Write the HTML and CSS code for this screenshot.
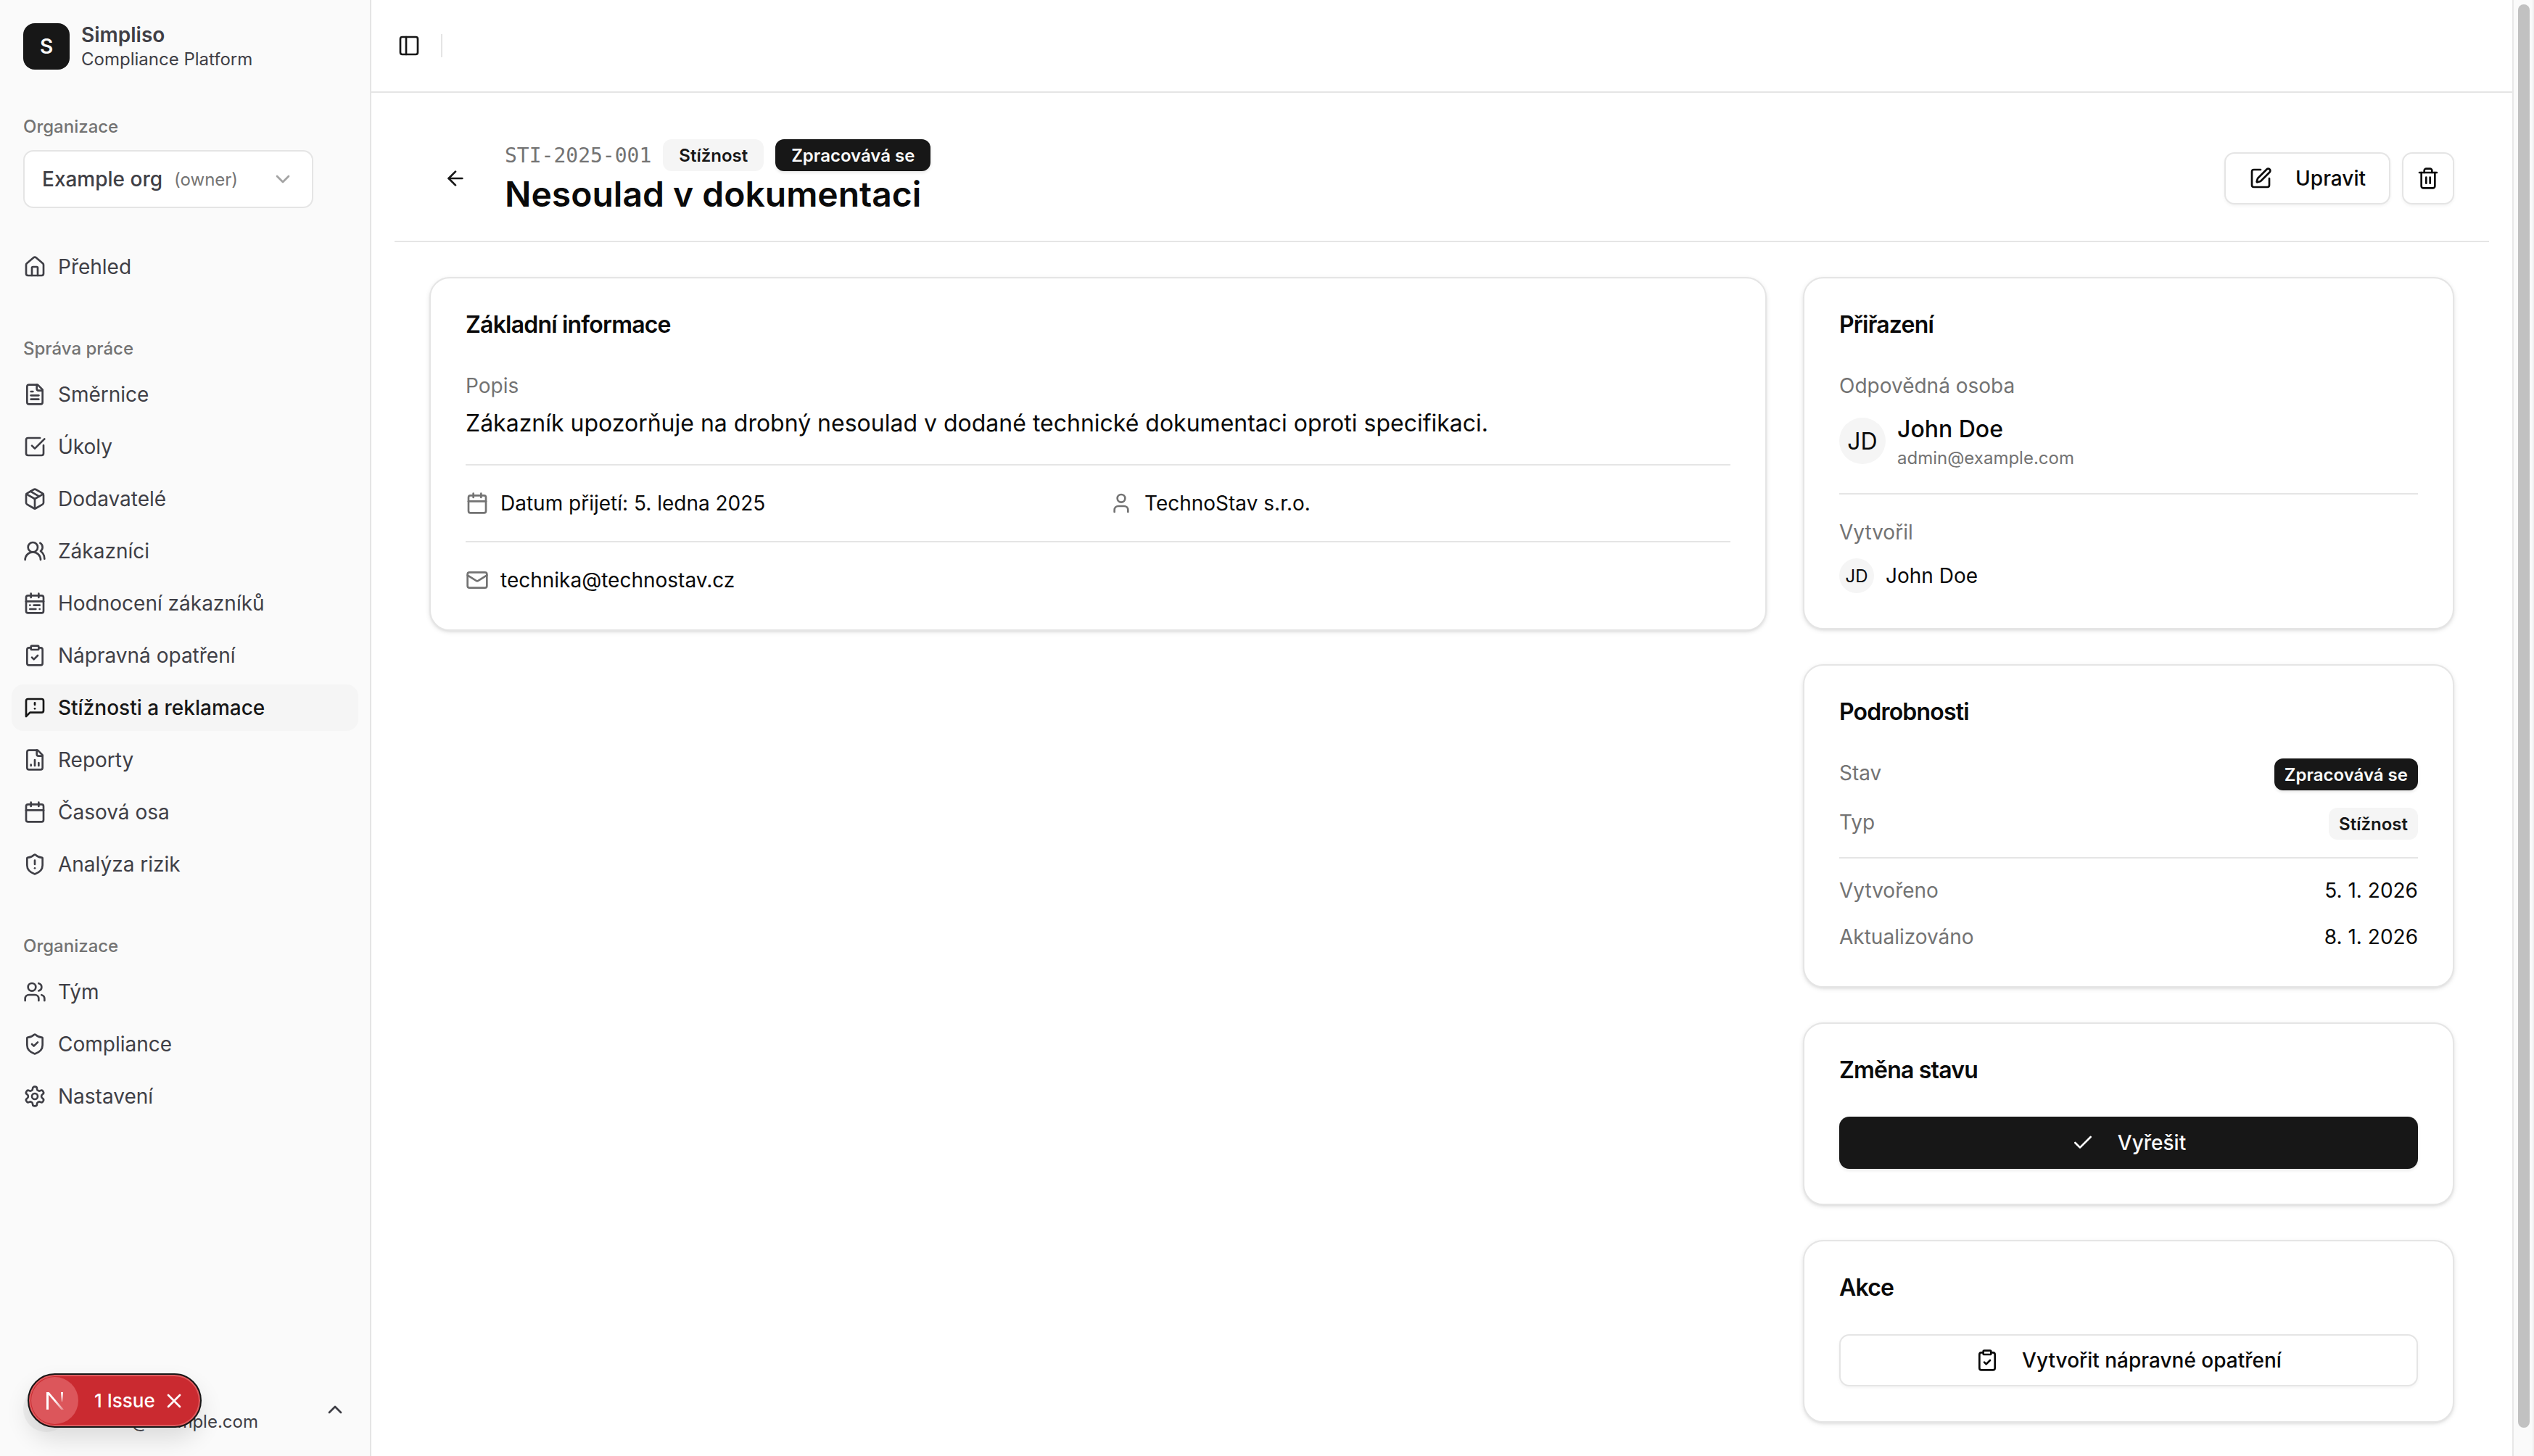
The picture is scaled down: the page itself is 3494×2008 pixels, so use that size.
FILE: index.html
```html
<!DOCTYPE html>
<html lang="cs">
<head>
<meta charset="utf-8">
<title>Nesoulad v dokumentaci</title>
<link rel="stylesheet" href="styles.css">
</head>
<body>
<svg class="sprite" aria-hidden="true">
  <symbol id="i-home" viewBox="0 0 24 24"><path d="M15 21v-8a1 1 0 0 0-1-1h-4a1 1 0 0 0-1 1v8"/><path d="M3 10a2 2 0 0 1 .709-1.528l7-5.999a2 2 0 0 1 2.582 0l7 5.999A2 2 0 0 1 21 10v9a2 2 0 0 1-2 2H5a2 2 0 0 1-2-2z"/></symbol>
  <symbol id="i-file" viewBox="0 0 24 24"><path d="M15 2H6a2 2 0 0 0-2 2v16a2 2 0 0 0 2 2h12a2 2 0 0 0 2-2V7Z"/><path d="M14 2v4a2 2 0 0 0 2 2h4"/><path d="M10 9H8"/><path d="M16 13H8"/><path d="M16 17H8"/></symbol>
  <symbol id="i-square-check" viewBox="0 0 24 24"><path d="M21 10.656V19a2 2 0 0 1-2 2H5a2 2 0 0 1-2-2V5a2 2 0 0 1 2-2h12.344"/><path d="m9 11 3 3L22 4"/></symbol>
  <symbol id="i-package" viewBox="0 0 24 24"><path d="M11 21.73a2 2 0 0 0 2 0l7-4A2 2 0 0 0 21 16V8a2 2 0 0 0-1-1.73l-7-4a2 2 0 0 0-2 0l-7 4A2 2 0 0 0 3 8v8a2 2 0 0 0 1 1.73z"/><path d="M12 22V12"/><polyline points="3.29 7 12 12 20.71 7"/><path d="m7.5 4.27 9 5.15"/></symbol>
  <symbol id="i-users-round" viewBox="0 0 24 24"><path d="M18 21a8 8 0 0 0-16 0"/><circle cx="10" cy="8" r="5"/><path d="M22 20c0-3.37-2-6.5-4-8a5 5 0 0 0-.45-8.3"/></symbol>
  <symbol id="i-cal-range" viewBox="0 0 24 24"><rect x="3" y="4" width="18" height="18" rx="2"/><path d="M16 2v4"/><path d="M3 10h18"/><path d="M8 2v4"/><path d="M17 14h-6"/><path d="M13 18H7"/><path d="M7 14h.01"/><path d="M17 18h.01"/></symbol>
  <symbol id="i-clipboard" viewBox="0 0 24 24"><rect x="8" y="2" width="8" height="4" rx="1"/><path d="M16 4h2a2 2 0 0 1 2 2v14a2 2 0 0 1-2 2H6a2 2 0 0 1-2-2V6a2 2 0 0 1 2-2h2"/><path d="m9 14 2 2 4-4"/></symbol>
  <symbol id="i-message" viewBox="0 0 24 24"><path d="M21 15a2 2 0 0 1-2 2H7l-4 4V5a2 2 0 0 1 2-2h14a2 2 0 0 1 2 2z"/><path d="M12 7v2"/><path d="M12 13h.01"/></symbol>
  <symbol id="i-chart" viewBox="0 0 24 24"><path d="M15 2H6a2 2 0 0 0-2 2v16a2 2 0 0 0 2 2h12a2 2 0 0 0 2-2V7Z"/><path d="M14 2v4a2 2 0 0 0 2 2h4"/><path d="M8 18v-1"/><path d="M12 18v-6"/><path d="M16 18v-3"/></symbol>
  <symbol id="i-calendar" viewBox="0 0 24 24"><path d="M8 2v4"/><path d="M16 2v4"/><rect x="3" y="4" width="18" height="18" rx="2"/><path d="M3 10h18"/></symbol>
  <symbol id="i-shield-alert" viewBox="0 0 24 24"><path d="M20 13c0 5-3.5 7.5-7.66 8.95a1 1 0 0 1-.67-.01C7.5 20.5 4 18 4 13V6a1 1 0 0 1 1-1c2 0 4.5-1.2 6.24-2.72a1.17 1.17 0 0 1 1.52 0C14.51 3.81 17 5 19 5a1 1 0 0 1 1 1z"/><path d="M12 8v4"/><path d="M12 16h.01"/></symbol>
  <symbol id="i-users" viewBox="0 0 24 24"><path d="M16 21v-2a4 4 0 0 0-4-4H6a4 4 0 0 0-4 4v2"/><circle cx="9" cy="7" r="4"/><path d="M22 21v-2a4 4 0 0 0-3-3.87"/><path d="M16 3.13a4 4 0 0 1 0 7.75"/></symbol>
  <symbol id="i-shield-check" viewBox="0 0 24 24"><path d="M20 13c0 5-3.5 7.5-7.66 8.95a1 1 0 0 1-.67-.01C7.5 20.5 4 18 4 13V6a1 1 0 0 1 1-1c2 0 4.5-1.2 6.24-2.72a1.17 1.17 0 0 1 1.52 0C14.51 3.81 17 5 19 5a1 1 0 0 1 1 1z"/><path d="m9 12 2 2 4-4"/></symbol>
  <symbol id="i-settings" viewBox="0 0 24 24"><path d="M12.22 2h-.44a2 2 0 0 0-2 2v.18a2 2 0 0 1-1 1.73l-.43.25a2 2 0 0 1-2 0l-.15-.08a2 2 0 0 0-2.73.73l-.22.38a2 2 0 0 0 .73 2.73l.15.1a2 2 0 0 1 1 1.72v.51a2 2 0 0 1-1 1.74l-.15.09a2 2 0 0 0-.73 2.73l.22.38a2 2 0 0 0 2.73.73l.15-.08a2 2 0 0 1 2 0l.43.25a2 2 0 0 1 1 1.73V20a2 2 0 0 0 2 2h.44a2 2 0 0 0 2-2v-.18a2 2 0 0 1 1-1.73l.43-.25a2 2 0 0 1 2 0l.15.08a2 2 0 0 0 2.73-.73l.22-.39a2 2 0 0 0-.73-2.73l-.15-.08a2 2 0 0 1-1-1.74v-.5a2 2 0 0 1 1-1.74l.15-.09a2 2 0 0 0 .73-2.73l-.22-.38a2 2 0 0 0-2.73-.73l-.15.08a2 2 0 0 1-2 0l-.43-.25a2 2 0 0 1-1-1.73V4a2 2 0 0 0-2-2z"/><circle cx="12" cy="12" r="3"/></symbol>
  <symbol id="i-chev-down" viewBox="0 0 24 24"><path d="m6 9 6 6 6-6"/></symbol>
  <symbol id="i-chev-up" viewBox="0 0 24 24"><path d="m18 15-6-6-6 6"/></symbol>
  <symbol id="i-panel" viewBox="0 0 24 24"><rect x="3" y="3" width="18" height="18" rx="2"/><path d="M9 3v18"/></symbol>
  <symbol id="i-arrow" viewBox="0 0 24 24"><path d="m12 19-7-7 7-7"/><path d="M19 12H5"/></symbol>
  <symbol id="i-pen" viewBox="0 0 24 24"><path d="M12 3H5a2 2 0 0 0-2 2v14a2 2 0 0 0 2 2h14a2 2 0 0 0 2-2v-7"/><path d="M18.375 2.625a1 1 0 0 1 3 3l-9.013 9.014a2 2 0 0 1-.853.505l-2.873.84a.5.5 0 0 1-.62-.62l.84-2.873a2 2 0 0 1 .506-.852z"/></symbol>
  <symbol id="i-trash" viewBox="0 0 24 24"><path d="M3 6h18"/><path d="M19 6v14c0 1-1 2-2 2H7c-1 0-2-1-2-2V6"/><path d="M8 6V4c0-1 1-2 2-2h4c1 0 2 1 2 2v2"/><line x1="10" y1="11" x2="10" y2="17"/><line x1="14" y1="11" x2="14" y2="17"/></symbol>
  <symbol id="i-user" viewBox="0 0 24 24"><path d="M19 21v-2a4 4 0 0 0-4-4H9a4 4 0 0 0-4 4v2"/><circle cx="12" cy="7" r="4"/></symbol>
  <symbol id="i-mail" viewBox="0 0 24 24"><rect x="2" y="4" width="20" height="16" rx="2"/><path d="m22 7-8.97 5.7a1.94 1.94 0 0 1-2.06 0L2 7"/></symbol>
  <symbol id="i-check" viewBox="0 0 24 24"><path d="M20 6 9 17l-5-5"/></symbol>
  <symbol id="i-x" viewBox="0 0 24 24"><path d="M18 6 6 18"/><path d="m6 6 12 12"/></symbol>
</svg>

<div class="app">
  <aside class="sidebar">
    <div class="brand">
      <div class="brand-logo">S</div>
      <div class="brand-text">
        <div class="brand-name">Simpliso</div>
        <div class="brand-sub">Compliance Platform</div>
      </div>
    </div>
    <div class="org">
      <div class="org-label">Organizace</div>
      <div class="org-select">
        <span class="org-name">Example org</span>
        <span class="org-role">(owner)</span>
        <svg class="icon org-chev"><use href="#i-chev-down"/></svg>
      </div>
    </div>
    <nav class="nav">
      <div class="nav-group">
        <a class="nav-item"><svg class="icon"><use href="#i-home"/></svg>Přehled</a>
      </div>
      <div class="nav-group">
        <div class="nav-label">Správa práce</div>
        <a class="nav-item"><svg class="icon"><use href="#i-file"/></svg>Směrnice</a>
        <a class="nav-item"><svg class="icon"><use href="#i-square-check"/></svg>Úkoly</a>
        <a class="nav-item"><svg class="icon"><use href="#i-package"/></svg>Dodavatelé</a>
        <a class="nav-item"><svg class="icon"><use href="#i-users-round"/></svg>Zákazníci</a>
        <a class="nav-item"><svg class="icon"><use href="#i-cal-range"/></svg>Hodnocení zákazníků</a>
        <a class="nav-item"><svg class="icon"><use href="#i-clipboard"/></svg>Nápravná opatření</a>
        <a class="nav-item nav-item-active"><svg class="icon"><use href="#i-message"/></svg>Stížnosti a reklamace</a>
        <a class="nav-item"><svg class="icon"><use href="#i-chart"/></svg>Reporty</a>
        <a class="nav-item"><svg class="icon"><use href="#i-calendar"/></svg>Časová osa</a>
        <a class="nav-item"><svg class="icon"><use href="#i-shield-alert"/></svg>Analýza rizik</a>
      </div>
      <div class="nav-group">
        <div class="nav-label">Organizace</div>
        <a class="nav-item"><svg class="icon"><use href="#i-users"/></svg>Tým</a>
        <a class="nav-item"><svg class="icon"><use href="#i-shield-check"/></svg>Compliance</a>
        <a class="nav-item"><svg class="icon"><use href="#i-settings"/></svg>Nastavení</a>
      </div>
    </nav>
    <div class="user">
      <div class="user-avatar">JD</div>
      <div class="user-text">
        <div class="user-name">John Doe</div>
        <div class="user-mail">admin@example.com</div>
      </div>
      <svg class="icon user-chev"><use href="#i-chev-up"/></svg>
    </div>
  </aside>

  <main class="main">
    <div class="topbar">
      <svg class="icon topbar-icon"><use href="#i-panel"/></svg>
      <span class="topbar-sep"></span>
    </div>
    <div class="page">
      <header class="page-head">
        <div class="back-btn"><svg class="icon"><use href="#i-arrow"/></svg></div>
        <div class="head-text">
          <div class="head-meta">
            <span class="code">STI-2025-001</span>
            <span class="badge badge-light">Stížnost</span>
            <span class="badge badge-dark">Zpracovává se</span>
          </div>
          <h1 class="title">Nesoulad v dokumentaci</h1>
        </div>
        <div class="head-actions">
          <div class="btn btn-outline btn-edit"><svg class="icon"><use href="#i-pen"/></svg>Upravit</div>
          <div class="btn btn-outline btn-square"><svg class="icon"><use href="#i-trash"/></svg></div>
        </div>
      </header>

      <div class="layout">
        <section class="card card-start">
          <h2 class="card-title">Základní informace</h2>
          <div class="label">Popis</div>
          <p class="desc">Zákazník upozorňuje na drobný nesoulad v dodané technické dokumentaci oproti specifikaci.</p>
          <hr class="rule">
          <div class="info-grid">
            <div class="info"><svg class="icon icon-muted"><use href="#i-calendar"/></svg>Datum přijetí: 5. ledna 2025</div>
            <div class="info"><svg class="icon icon-muted"><use href="#i-user"/></svg>TechnoStav s.r.o.</div>
          </div>
          <hr class="rule">
          <div class="info"><svg class="icon icon-muted"><use href="#i-mail"/></svg>technika@technostav.cz</div>
        </section>

        <div class="side">
          <section class="card">
            <h2 class="card-title">Přiřazení</h2>
            <div class="label">Odpovědná osoba</div>
            <div class="person">
              <div class="avatar avatar-lg">JD</div>
              <div>
                <div class="person-name">John Doe</div>
                <div class="person-mail">admin@example.com</div>
              </div>
            </div>
            <hr class="rule">
            <div class="label">Vytvořil</div>
            <div class="person person-sm">
              <div class="avatar avatar-sm">JD</div>
              <div class="person-sm-name">John Doe</div>
            </div>
          </section>

          <section class="card">
            <h2 class="card-title">Podrobnosti</h2>
            <div class="detail-row"><span class="label">Stav</span><span class="badge badge-dark badge-compact">Zpracovává se</span></div>
            <div class="detail-row detail-gap"><span class="label">Typ</span><span class="badge badge-light badge-compact">Stížnost</span></div>
            <hr class="rule rule-24">
            <div class="detail-row"><span class="label">Vytvořeno</span><span class="value">5. 1. 2026</span></div>
            <div class="detail-row detail-gap"><span class="label">Aktualizováno</span><span class="value">8. 1. 2026</span></div>
          </section>

          <section class="card">
            <h2 class="card-title">Změna stavu</h2>
            <div class="btn btn-primary btn-full"><svg class="icon"><use href="#i-check"/></svg>Vyřešit</div>
          </section>

          <section class="card">
            <h2 class="card-title">Akce</h2>
            <div class="btn btn-outline btn-full"><svg class="icon"><use href="#i-clipboard"/></svg>Vytvořit nápravné opatření</div>
          </section>
        </div>
      </div>
    </div>
  </main>

  <div class="scrollbar"><div class="scrollbar-thumb"></div></div>
</div>

<div class="dev-badge">
  <div class="dev-logo">
    <svg class="dev-n" viewBox="0 0 24 24">
      <defs>
        <linearGradient id="n-diag" x1="0" y1="0" x2="1" y2="1"><stop offset="0.45" stop-color="#fff"/><stop offset="1" stop-color="#fff" stop-opacity=".3"/></linearGradient>
        <linearGradient id="n-stem" x1="0" y1="0" x2="0" y2="1"><stop offset="0" stop-color="#fff"/><stop offset="1" stop-color="#fff" stop-opacity=".15"/></linearGradient>
      </defs>
      <path d="M0 0h3v24H0z" fill="#fff"/>
      <path d="M0 0h3.600L24 24h-3.600z" fill="url(#n-diag)"/>
      <path d="M20 0h3v13h-3z" fill="url(#n-stem)"/>
    </svg>
  </div>
  <span class="dev-text">1 Issue</span>
  <svg class="icon dev-x"><use href="#i-x"/></svg>
</div>
</body>
</html>
```

FILE: styles.css
```css
* { box-sizing: border-box; }
html, body { margin: 0; height: 100%; }
body {
  font-family: Inter, "Noto Sans", sans-serif;
  color: #171717;
  background: #fff;
  overflow: hidden;
}
.sprite { display: none; }
.icon {
  width: 32px;
  height: 32px;
  flex: none;
  fill: none;
  stroke: currentColor;
  stroke-width: 2;
  stroke-linecap: round;
  stroke-linejoin: round;
}
.icon-muted { color: #737373; }

.app { display: flex; height: 2008px; }

/* Sidebar */
.sidebar {
  width: 512px;
  flex: none;
  display: flex;
  flex-direction: column;
  background: #fafafa;
  border-right: 2px solid #e5e5e5;
  color: #3f3f46;
}
.brand { display: flex; align-items: flex-start; gap: 16px; padding: 32px 32px 0; }
.brand-logo {
  width: 64px;
  height: 64px;
  border-radius: 16px;
  background: #171717;
  color: #fafafa;
  display: flex;
  align-items: center;
  justify-content: center;
  font-size: 28px;
  font-weight: 600;
}
.brand-name { font-size: 28px; line-height: 32px; font-weight: 600; }
.brand-sub { font-size: 24px; line-height: 32px; margin-top: 2px; }
.org { padding: 61px 32px 0; }
.org-label { font-size: 24px; line-height: 32px; color: #737373; margin-bottom: 16px; font-weight: 500; }
.org-select {
  height: 80px;
  width: 400px;
  display: flex;
  align-items: center;
  padding: 0 24px;
  background: #fff;
  border: 2px solid #e5e5e5;
  border-radius: 14px;
}
.org-name { font-size: 28px; font-weight: 500; }
.org-role { font-size: 24px; color: #737373; margin-left: 16px; }
.org-chev { margin-left: auto; color: #a3a3a3; }

.nav { flex: 1; padding-top: 33px; }
.nav-group { padding: 16px; }
.nav-group + .nav-group { margin-top: 16px; }
.nav-label {
  height: 64px;
  padding: 0 16px;
  display: flex;
  align-items: center;
  font-size: 24px;
  font-weight: 500;
  color: #737373;
}
.nav-item {
  height: 64px;
  display: flex;
  align-items: center;
  gap: 16px;
  padding: 0 16px;
  border-radius: 16px;
  font-size: 28px;
}
.nav-item + .nav-item { margin-top: 8px; }
.nav-item-active { background: #f5f5f5; color: #171717; font-weight: 500; }

.user { display: flex; align-items: center; gap: 16px; padding: 0 32px 31px; position: relative; }
.user-avatar {
  width: 64px;
  height: 64px;
  border-radius: 50%;
  background: #f0f0f0;
  display: flex;
  align-items: center;
  justify-content: center;
  font-size: 24px;
}
.user-name { font-size: 28px; line-height: 36px; font-weight: 500; }
.user-mail { font-size: 24px; line-height: 32px; }
.user-chev { margin-left: auto; margin-top: 2px; }

/* Main */
.main { flex: 1; min-width: 0; }
.topbar {
  height: 128px;
  display: flex;
  align-items: center;
  padding-left: 36px;
  border-bottom: 2px solid #e5e5e5;
}
.topbar-sep { width: 2px; height: 32px; background: #e5e5e5; margin-left: 28px; }
.page { padding: 64px 32px 0; }
.page-head {
  display: flex;
  align-items: center;
  padding: 0 48px 32px;
  border-bottom: 2px solid #e5e5e5;
  gap: 32px;
}
.back-btn { width: 72px; height: 72px; display: flex; align-items: center; justify-content: center; }
.head-text { flex: 1; min-width: 0; }
.head-meta { display: flex; align-items: center; gap: 16px; }
.code { font-family: "DejaVu Sans Mono", "Liberation Mono", monospace; font-size: 28px; color: #737373; }
.badge {
  display: inline-flex;
  align-items: center;
  height: 44px;
  padding: 0 20px;
  border: 2px solid transparent;
  border-radius: 12px;
  font-size: 24px;
  font-weight: 600;
  white-space: nowrap;
}
.badge-compact { padding: 0 12px; }
.badge-light { background: #f5f5f5; color: #171717; }
.badge-dark { background: #171717; color: #fafafa; box-shadow: 0 2px 4px rgba(0,0,0,.1); }
.title { margin: 0; font-size: 48px; line-height: 64px; font-weight: 600; color: #0a0a0a; }
.head-actions { display: flex; gap: 16px; }
.btn {
  height: 72px;
  display: flex;
  align-items: center;
  justify-content: center;
  gap: 32px;
  border-radius: 14px;
  font-size: 28px;
  font-weight: 500;
}
.btn-outline { background: #fff; border: 2px solid #e5e5e5; box-shadow: 0 2px 4px rgba(0,0,0,.05); color: #0a0a0a; }
.btn-edit { padding: 0 32px; }
.btn-square { width: 72px; }
.btn-primary { background: #171717; color: #fafafa; box-shadow: 0 2px 4px rgba(0,0,0,.1); }
.btn-full { width: 100%; }

/* Layout */
.layout {
  display: grid;
  grid-template-columns: 1844px 898px;
  gap: 50px;
  padding: 48px 48px 0;
}
.side { display: flex; flex-direction: column; gap: 48px; }
.card {
  background: #fff;
  border: 2px solid #e5e5e5;
  border-radius: 28px;
  padding: 48px;
  box-shadow: 0 2px 6px rgba(0,0,0,.1), 0 2px 4px -2px rgba(0,0,0,.1);
}
.card-start { align-self: start; }
.card-title { margin: 0 0 48px; font-size: 32px; line-height: 32px; font-weight: 600; color: #0a0a0a; letter-spacing: -.8px; }
.label { font-size: 28px; line-height: 40px; color: #737373; }
.desc { margin: 8px 0 0; font-size: 32px; line-height: 48px; color: #0a0a0a; }
.rule { border: 0; height: 2px; background: #e5e5e5; margin: 32px 0; }
.rule-24 { margin: 24px 0; }
.info-grid { display: grid; grid-template-columns: 1fr 1fr; gap: 32px; }
.info { display: flex; align-items: center; gap: 16px; font-size: 28px; line-height: 40px; color: #0a0a0a; }

.person { display: flex; align-items: center; gap: 16px; margin-top: 16px; }
.avatar {
  border-radius: 50%;
  background: #f5f5f5;
  display: flex;
  align-items: center;
  justify-content: center;
  flex: none;
  color: #0a0a0a;
}
.avatar-lg { width: 64px; height: 64px; font-size: 32px; }
.avatar-sm { width: 48px; height: 48px; font-size: 24px; }
.person-name { font-size: 32px; line-height: 48px; font-weight: 500; color: #0a0a0a; }
.person-mail { font-size: 24px; line-height: 32px; color: #737373; }
.person-sm-name { font-size: 28px; color: #0a0a0a; }

.detail-row { display: flex; align-items: flex-start; justify-content: space-between; }
.detail-gap { margin-top: 24px; }
.value { font-size: 28px; line-height: 40px; color: #0a0a0a; }

/* Scrollbar */
.scrollbar {
  width: 30px;
  flex: none;
  background: #fafafa;
  border-left: 2px solid #e8e8e8;
  border-right: 2px solid #f0f0f0;
  padding: 6px 4px 0 6px;
}
.scrollbar-thumb { height: 1963px; background: #c1c1c1; border-radius: 8px; }

/* Dev badge overlay */
.dev-badge {
  position: absolute;
  left: 38px;
  top: 1894px;
  width: 240px;
  height: 75px;
  display: flex;
  align-items: center;
  background: #ca2a30;
  border: 2px solid #171717;
  border-radius: 38px;
  box-shadow: inset 0 0 0 2px #dd5c5f, 0 16px 32px rgba(0,0,0,.12);
  color: #fff;
}
.dev-logo {
  width: 65px;
  height: 65px;
  margin-left: 3px;
  border-radius: 50%;
  background: #dc565b;
  display: flex;
  align-items: center;
  justify-content: center;
  flex: none;
}
.dev-n { width: 24px; height: 24px; }
.dev-text { font-size: 26px; font-weight: 500; margin-left: 22px; white-space: nowrap; }
.dev-x { margin-left: 10px; color: #fff; }
```
